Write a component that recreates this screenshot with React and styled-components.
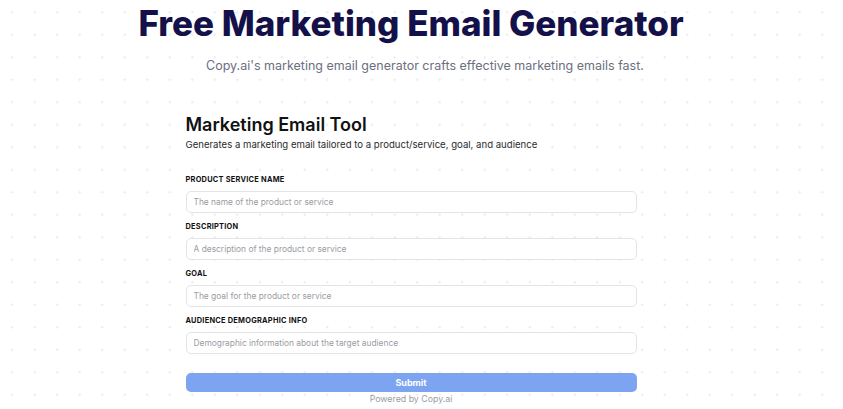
import React from "react";
import styled, { createGlobalStyle } from "styled-components";

const Global = createGlobalStyle`
  html, body { margin: 0; padding: 0; }
  body {
    font-family: Inter, "Noto Sans", sans-serif;
    background-color: #fff;
    background-image: radial-gradient(circle, #ececf0 1px, transparent 1.2px);
    background-size: 22.5px 22.5px;
    background-position: 1px 1px;
    width: 843px;
    height: 409px;
    overflow: hidden;
  }
`;

const Page = styled.div`
  width: 843px;
  height: 409px;
  display: flex;
  flex-direction: column;
  align-items: center;
  padding-right: 21px;
  box-sizing: border-box;
`;

const Title = styled.h1`
  margin: 3px 0 0 0;
  font-size: 35px;
  line-height: 40px;
  font-weight: 800;
  color: #14114a;
`;

const Subtitle = styled.p`
  margin: 15px 0 0 0;
  font-size: 12.5px;
  line-height: 16px;
  color: #6b6f80;
  padding-left: 28px;
`;

const Card = styled.div`
  width: 451px;
  margin-top: 39px;
  display: flex;
  flex-direction: column;
`;

const CardTitle = styled.h2`
  margin: 0;
  font-size: 18px;
  line-height: 24px;
  font-weight: 600;
  color: #111;
`;

const CardDesc = styled.p`
  margin: 1px 0 0 0;
  font-size: 9.6px;
  line-height: 14px;
  color: #2b2b2b;
`;

const Form = styled.form`
  margin-top: 23px;
  display: flex;
  flex-direction: column;
  gap: 9px;
`;

const Field = styled.label`
  display: flex;
  flex-direction: column;
  gap: 6px;
`;

const Label = styled.span`
  font-size: 7.4px;
  line-height: 10px;
  font-weight: 700;
  letter-spacing: 0.25px;
  color: #111;
  text-transform: uppercase;
`;

const Input = styled.input`
  height: 22px;
  box-sizing: border-box;
  border: 1px solid #e2e4e8;
  border-radius: 5px;
  padding: 0 7px;
  font-family: inherit;
  font-size: 8.4px;
  color: #333;
  background: #fff;
  outline: none;
  &::placeholder { color: #9a9ca3; }
`;

const Button = styled.button`
  margin-top: 10px;
  height: 19px;
  border: none;
  border-radius: 5px;
  background: #7ca4f0;
  color: #fff;
  font-family: inherit;
  font-size: 9px;
  font-weight: 700;
  cursor: pointer;
`;

const Powered = styled.div`
  margin-top: 1px;
  text-align: center;
  font-size: 8.8px;
  line-height: 12px;
  color: #9a9ca3;
`;

const fields = [
  ["Product Service Name", "The name of the product or service"],
  ["Description", "A description of the product or service"],
  ["Goal", "The goal for the product or service"],
  ["Audience Demographic Info", "Demographic information about the target audience"],
];

export default function App() {
  return (
    <>
      <Global />
      <Page>
        <Title>Free Marketing Email Generator</Title>
        <Subtitle>Copy.ai's marketing email generator crafts effective marketing emails fast.</Subtitle>
        <Card>
          <CardTitle>Marketing Email Tool</CardTitle>
          <CardDesc>Generates a marketing email tailored to a product/service, goal, and audience</CardDesc>
          <Form onSubmit={(e) => e.preventDefault()}>
            {fields.map(([l, p]) => (
              <Field key={l}>
                <Label>{l}</Label>
                <Input placeholder={p} />
              </Field>
            ))}
            <Button type="submit">Submit</Button>
          </Form>
          <Powered>Powered by Copy.ai</Powered>
        </Card>
      </Page>
    </>
  );
}
